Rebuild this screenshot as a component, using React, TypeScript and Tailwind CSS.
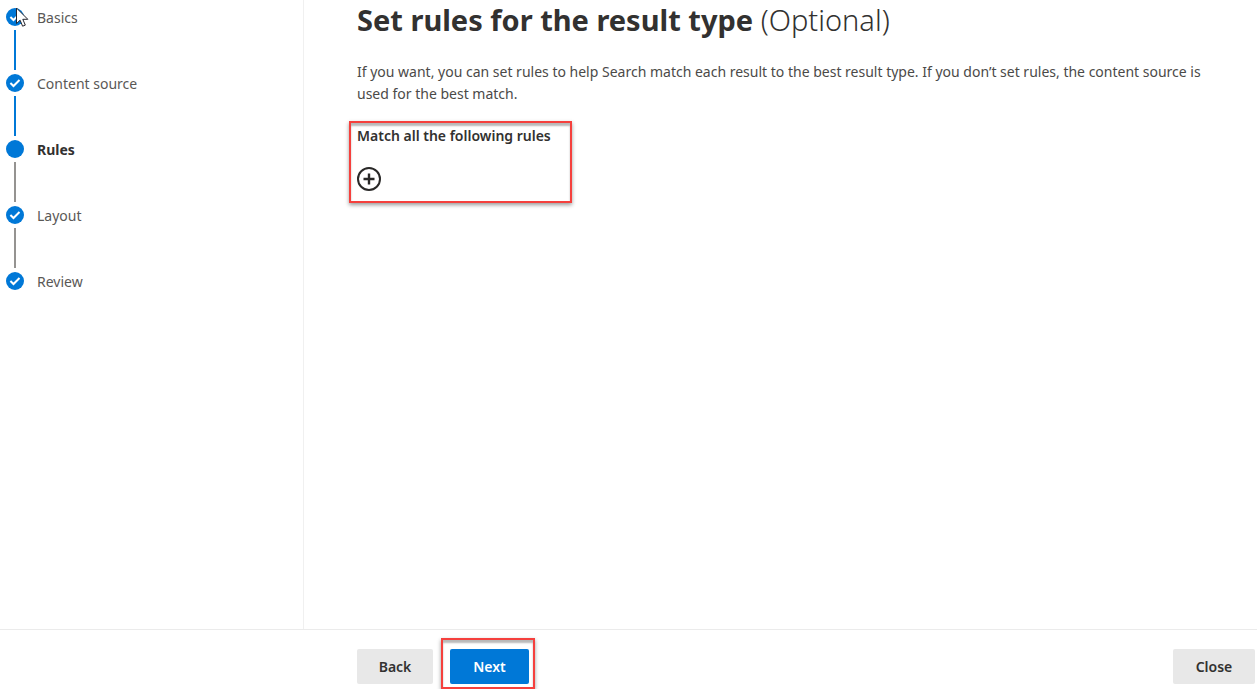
type StepState = "done" | "current";

interface Step {
  label: string;
  state: StepState;
  line?: string;
}

const steps: Step[] = [
  { label: "Basics", state: "done", line: "bg-[#0078d7]" },
  { label: "Content source", state: "done", line: "bg-[#0078d7]" },
  { label: "Rules", state: "current", line: "bg-[#959391]" },
  { label: "Layout", state: "done", line: "bg-[#959391]" },
  { label: "Review", state: "done" },
];

function StepMarker({ state }: { state: StepState }) {
  return (
    <svg viewBox="0 0 18 18" className="size-[18px] shrink-0" aria-hidden="true">
      <circle cx="9" cy="9" r="9" fill="#0078d7" />
      {state === "done" && (
        <path d="M4.4 9 7.5 12l6-6" fill="none" stroke="#fff" strokeWidth="2" />
      )}
    </svg>
  );
}

function Cursor() {
  return (
    <svg viewBox="0 0 14 21" className="absolute left-[15px] top-[7px] h-[21px] w-[14px]" aria-hidden="true">
      <path
        d="M1.5 1v15.6l3.6-3.4 2.5 6 2.7-1.1-2.5-5.8h5Z"
        fill="#fff"
        stroke="#26262e"
        strokeWidth="1"
      />
    </svg>
  );
}

function Steps() {
  return (
    <nav aria-label="Progress" className="relative w-[304px] shrink-0 border-r border-[#f0f0f0] pt-2 pl-1.5">
      <ol>
        {steps.map((step) => (
          <li key={step.label} className="flex gap-[13px]">
            <div className="flex flex-col items-center gap-1">
              <StepMarker state={step.state} />
              {step.line && <span className={`mb-1 h-10 w-0.5 ${step.line}`} />}
            </div>
            <a
              href="#"
              aria-current={step.state === "current" ? "step" : undefined}
              className={
                step.state === "current"
                  ? "h-5 text-sm leading-5 font-bold text-[#323130]"
                  : "h-5 text-sm leading-5 text-[#5a5856]"
              }
            >
              {step.label}
            </a>
          </li>
        ))}
      </ol>
      <Cursor />
    </nav>
  );
}

const callout =
  "border-2 border-[#f5403d] shadow-[0_2px_4px_rgba(0,0,0,0.4),inset_0_3px_2px_rgba(0,0,0,0.28)]";
const button = "h-[35px] rounded-xs text-sm font-semibold";

export default function App() {
  return (
    <div className="flex min-h-screen flex-col bg-white font-['Noto_Sans','Open_Sans',sans-serif] text-[#323130]">
      <div className="flex flex-1">
        <Steps />
        <main className="min-w-0 flex-1 pr-7 pl-[53px]">
          <h1 className="text-[29px] leading-10 font-bold">
            Set rules for the result type <span className="font-light">(Optional)</span>
          </h1>
          <p className="mt-[21px] text-sm leading-[22px] text-[#4b4a48]">
            If you want, you can set rules to help Search match each result to the best result type. If you
            don’t set rules, the content source is used for the best match.
          </p>
          <section className={`mt-4 -ml-2 h-[82px] w-[223px] pl-1.5 ${callout}`}>
            <h2 className="pt-0.5 text-sm leading-[22px] font-semibold whitespace-nowrap">
              Match all the following rules
            </h2>
            <button type="button" aria-label="Add rule" className="mt-5 block size-6">
              <svg viewBox="0 0 24 24" className="size-6" fill="none" stroke="#292827" strokeWidth="2">
                <circle cx="12" cy="12" r="11" />
                <path d="M12 6.5v11M6.5 12h11" strokeWidth="2.4" />
              </svg>
            </button>
          </section>
        </main>
      </div>
      <footer className="flex h-[60px] items-start border-t border-[#ebebeb] pr-0.5 pl-[357px]">
        <button type="button" className={`mt-[19px] w-[76px] bg-[#e8e8e8] ${button}`}>
          Back
        </button>
        <div className={`mt-2 ml-2 h-[51px] w-[94px] pt-[9px] pr-1 pl-[7px] ${callout}`}>
          <button type="button" className={`w-full bg-[#0078d7] text-white ${button}`}>
            Next
          </button>
        </div>
        <button type="button" className={`mt-[19px] ml-auto w-[82px] bg-[#e8e8e8] ${button}`}>
          Close
        </button>
      </footer>
    </div>
  );
}
